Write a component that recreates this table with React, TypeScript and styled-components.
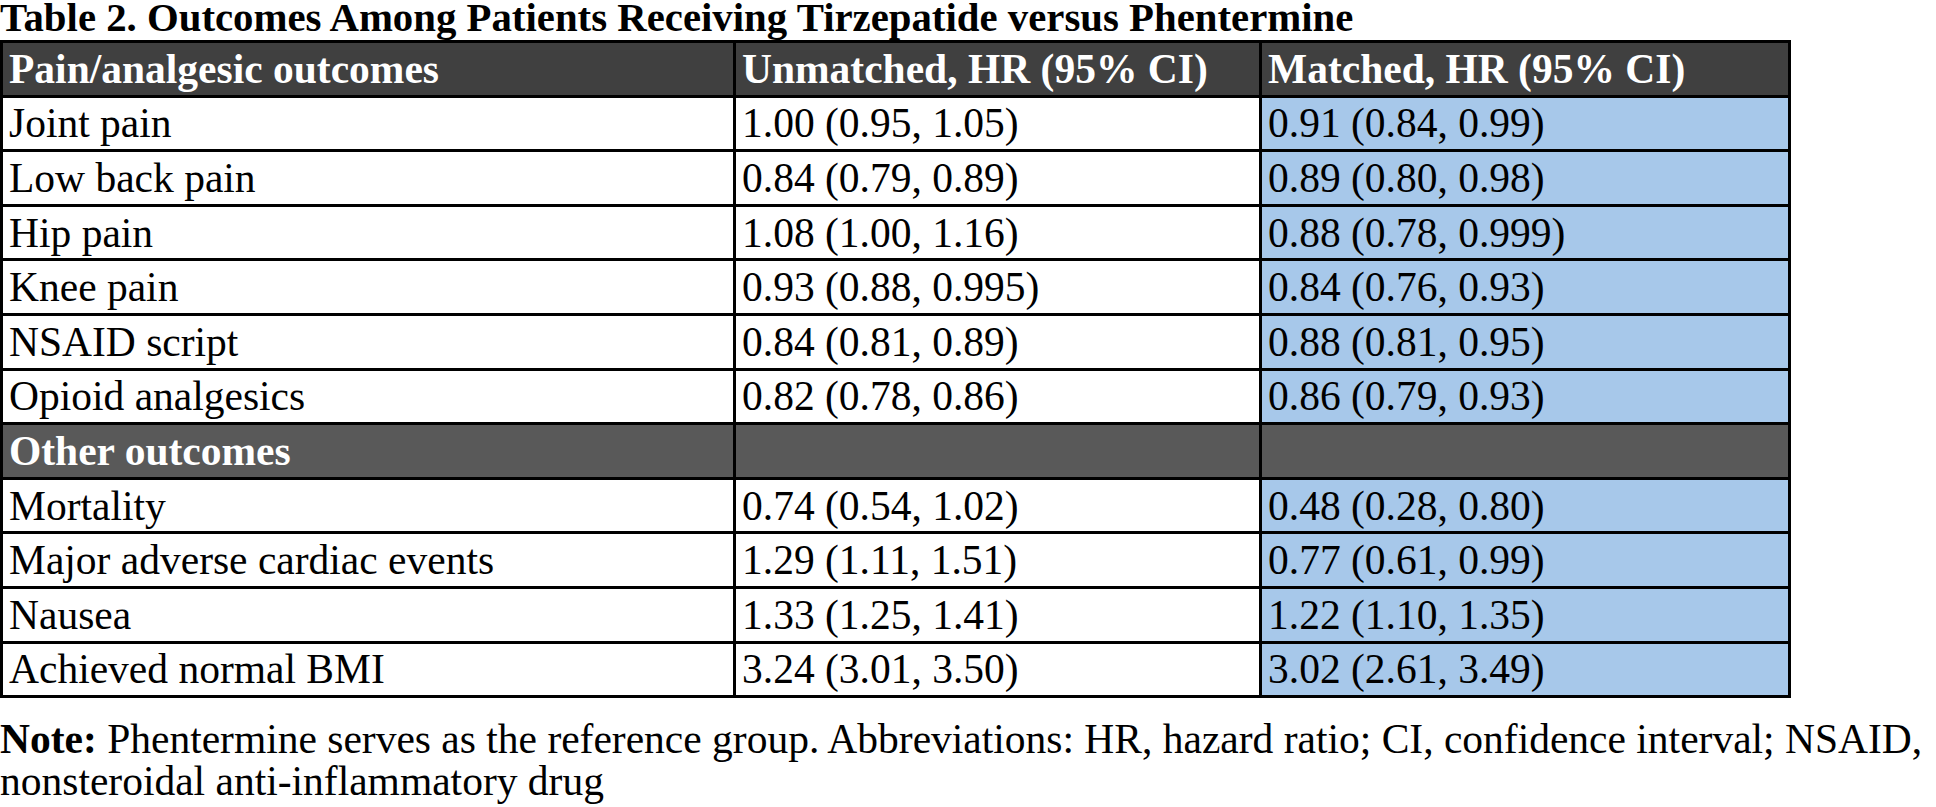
import React from 'react'
import styled, { createGlobalStyle, css } from 'styled-components'

const GlobalStyle = createGlobalStyle`
  html, body {
    margin: 0;
    padding: 0;
    background: #ffffff;
  }
  body {
    font-family: "Liberation Serif", "Times New Roman", serif;
    color: #000000;
  }
`

type Row = { label: string; unmatched: string; matched: string }

const painRows: Row[] = [
  { label: 'Joint pain', unmatched: '1.00 (0.95, 1.05)', matched: '0.91 (0.84, 0.99)' },
  { label: 'Low back pain', unmatched: '0.84 (0.79, 0.89)', matched: '0.89 (0.80, 0.98)' },
  { label: 'Hip pain', unmatched: '1.08 (1.00, 1.16)', matched: '0.88 (0.78, 0.999)' },
  { label: 'Knee pain', unmatched: '0.93 (0.88, 0.995)', matched: '0.84 (0.76, 0.93)' },
  { label: 'NSAID script', unmatched: '0.84 (0.81, 0.89)', matched: '0.88 (0.81, 0.95)' },
  { label: 'Opioid analgesics', unmatched: '0.82 (0.78, 0.86)', matched: '0.86 (0.79, 0.93)' },
]

const otherRows: Row[] = [
  { label: 'Mortality', unmatched: '0.74 (0.54, 1.02)', matched: '0.48 (0.28, 0.80)' },
  { label: 'Major adverse cardiac events', unmatched: '1.29 (1.11, 1.51)', matched: '0.77 (0.61, 0.99)' },
  { label: 'Nausea', unmatched: '1.33 (1.25, 1.41)', matched: '1.22 (1.10, 1.35)' },
  { label: 'Achieved normal BMI', unmatched: '3.24 (3.01, 3.50)', matched: '3.02 (2.61, 3.49)' },
]

const App = () => {
  return (
    <Page>
      <GlobalStyle />
      <Title>Table 2. Outcomes Among Patients Receiving Tirzepatide versus Phentermine</Title>
      <Table>
        <colgroup>
          <col style={{ width: 733 }} />
          <col style={{ width: 526 }} />
          <col style={{ width: 529 }} />
        </colgroup>
        <tbody>
          <tr>
            <HeadCell $tone="dark">Pain/analgesic outcomes</HeadCell>
            <HeadCell $tone="dark">Unmatched, HR (95% CI)</HeadCell>
            <HeadCell $tone="dark">Matched, HR (95% CI)</HeadCell>
          </tr>
          {painRows.map((r) => (
            <tr key={r.label}>
              <Cell>{r.label}</Cell>
              <Cell>{r.unmatched}</Cell>
              <Cell $blue>{r.matched}</Cell>
            </tr>
          ))}
          <tr>
            <HeadCell $tone="mid">Other outcomes</HeadCell>
            <HeadCell $tone="mid" />
            <HeadCell $tone="mid" />
          </tr>
          {otherRows.map((r) => (
            <tr key={r.label}>
              <Cell>{r.label}</Cell>
              <Cell>{r.unmatched}</Cell>
              <Cell $blue>{r.matched}</Cell>
            </tr>
          ))}
        </tbody>
      </Table>
      <Note>
        <b>Note:</b> Phentermine serves as the reference group. Abbreviations: HR, hazard ratio; CI, confidence interval; NSAID,
        <br />
        nonsteroidal anti-inflammatory drug
      </Note>
    </Page>
  )
}

const Page = styled.div`
  width: 1936px;
  height: 807px;
  overflow: hidden;
  font-size: 41.5px;
`

const Title = styled.div`
  font-weight: bold;
  font-size: 40.8px;
  line-height: 36px;
  padding-bottom: 4px;
  white-space: nowrap;
`

const Table = styled.table`
  border-collapse: collapse;
  table-layout: fixed;
  width: 1788px;
  border: 3px solid #000;
`

const cellBase = css`
  border: 3px solid #000;
  height: 51.6px;
  padding: 0 6px;
  line-height: 46px;
  text-align: left;
  vertical-align: middle;
  white-space: nowrap;
  overflow: hidden;
`

const HeadCell = styled.td<{ $tone: 'dark' | 'mid' }>`
  ${cellBase}
  font-weight: bold;
  color: #ffffff;
  background: ${(p) => (p.$tone === 'dark' ? '#404040' : '#595959')};
`

const Cell = styled.td<{ $blue?: boolean }>`
  ${cellBase}
  background: ${(p) => (p.$blue ? '#a7c8ea' : '#ffffff')};
`

const Note = styled.div`
  margin-top: 20px;
  line-height: 42px;
  white-space: nowrap;
`

export default App
